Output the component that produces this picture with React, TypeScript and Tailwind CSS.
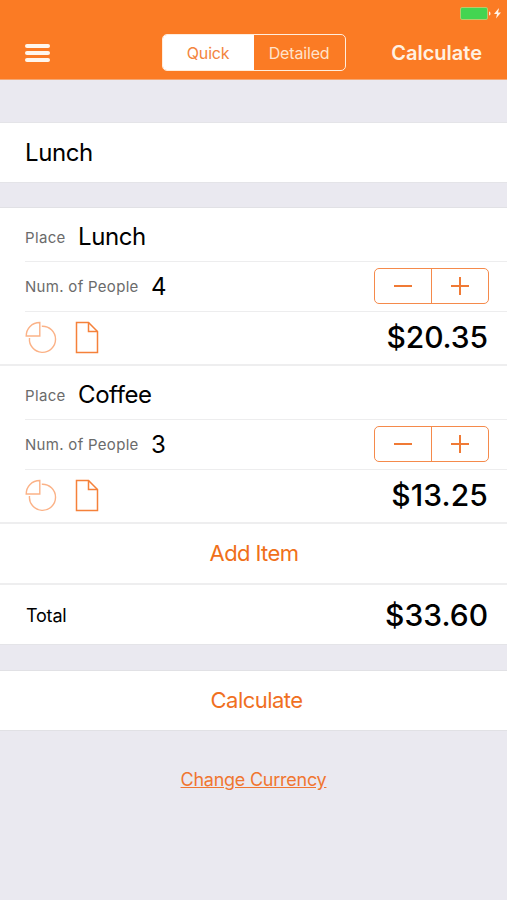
import React from 'react';

const items = [
  { place: 'Lunch', people: 4, amount: '$20.35', amountStyle: 'tracking-[-0.1px]' },
  { place: 'Coffee', people: 3, amount: '$13.25', amountStyle: 'tracking-[0.1px]' },
];

function PieIcon() {
  return (
    <svg width="33" height="33" viewBox="0 0 33 33" fill="none" stroke="#fbb287" strokeWidth="1.4">
      <path d="M14.8 1.5V15H1.2C1.2 7.5 7 1.5 14.8 1.5Z" />
      <path d="M16.8 5.3A13.05 13.05 0 1 1 4.5 17" />
    </svg>
  );
}

function PageIcon() {
  return (
    <svg width="24" height="33" viewBox="0 0 24 33" fill="none" stroke="#f5813a" strokeWidth="1.5">
      <path d="M1.5 1.5H13.5L22.5 10.5V31.5H1.5Z" />
      <path d="M13.5 1.5V10.5H22.5" />
    </svg>
  );
}

function Stepper() {
  return (
    <div className="flex w-[115px] h-[36px] rounded-[5px] border-[1.5px] border-[#f58a4b] text-[#f07a35]">
      <button className="w-[57px] flex items-center justify-center border-r border-[#f58a4b]">
        <svg width="20" height="20" viewBox="0 0 20 20" stroke="currentColor" strokeWidth="2"><path d="M1 10H19" /></svg>
      </button>
      <button className="flex-1 flex items-center justify-center">
        <svg width="20" height="20" viewBox="0 0 20 20" stroke="currentColor" strokeWidth="2"><path d="M1 10H19M10 1V19" /></svg>
      </button>
    </div>
  );
}

function Item({ item }: any) {
  return (
    <div className="bg-white border-b-2 border-[#eeeeef]">
      <div className="ml-[25px] h-[54px] pt-[5px] flex items-center border-b border-[#ededee]">
        <span className="w-[53px] pt-[2px] text-[15px] text-[#6b6b6b] tracking-[0.35px]">Place</span>
        <span className="text-[24px] tracking-[-0.4px]">{item.place}</span>
      </div>
      <div className="ml-[25px] pr-[18px] h-[50px] flex items-center border-b border-[#ededee]">
        <span className="w-[126px] pt-px whitespace-nowrap text-[15px] text-[#6b6b6b] tracking-[0.3px]">Num. of People</span>
        <span className="text-[24px]">{item.people}</span>
        <div className="ml-auto pb-px"><Stepper /></div>
      </div>
      <div className="pl-[25px] pr-[19px] h-[52px] flex items-center">
        <div className="pb-[2px]"><PieIcon /></div>
        <div className="ml-[17px] pb-[2px]"><PageIcon /></div>
        <span className={`ml-auto pb-px text-[30px] font-medium ${item.amountStyle}`}>{item.amount}</span>
      </div>
    </div>
  );
}

export default function App() {
  return (
    <div className="w-full h-[900px] bg-[#eae9f0] text-black font-['Inter',sans-serif]">
      <header className="h-[80px] bg-[#fb7b24] border-b border-[#f3a876] text-white">
        <div className="h-[26px] pt-[7px] pr-[5px] flex justify-end">
          <svg width="42" height="13" viewBox="0 0 42 13">
            <rect x="0.5" y="0.5" width="27" height="12" rx="1.5" fill="#43d551" stroke="#b9c96b" />
            <path d="M29 4.5C31 5 31 8.5 29 8.5Z" fill="#ffe9d8" />
            <path d="M38.5 1.5L34 7H37L36 11.5L41 5.5H38L39 1.5Z" fill="#fff3e8" />
          </svg>
        </div>
        <div className="h-[53px] pl-[25px] pr-[25px] flex items-center justify-between">
          <button className="w-[25px] flex flex-col gap-[3px]">
            <span className="h-[4px] rounded-[2px] bg-[#fff6ec]" />
            <span className="h-[4px] rounded-[2px] bg-[#fff6ec]" />
            <span className="h-[4px] rounded-[2px] bg-[#fff6ec]" />
          </button>
          <div className="ml-[66px] flex w-[184px] h-[37px] rounded-[5px] border-[1.5px] border-[#ffeddd] text-[16px] tracking-[-0.15px] overflow-hidden">
            <button className="w-[91px] bg-white text-[#f3843d]">Quick</button>
            <button className="flex-1 text-[#ffe3cb]">Detailed</button>
          </div>
          <button className="text-[20px] font-semibold text-[#fff1e2]">Calculate</button>
        </div>
      </header>

      <div className="mt-[42px] h-[61px] pl-[25px] flex items-center bg-white border-y border-[#e4e4e8]">
        <span className="text-[24px] tracking-[-0.4px]">Lunch</span>
      </div>

      <div className="mt-[24px] border-t border-[#e1e1e5]">
        {items.map((item) => <Item key={item.place} item={item} />)}
        <button className="w-full h-[61px] pl-px block bg-white border-b-2 border-[#eeeeef] text-[22px] tracking-[-0.6px] text-[#f0701a]">Add Item</button>
        <div className="h-[60px] pl-[26px] pr-[19px] flex items-center justify-between bg-white border-b border-[#e4e4e8]">
          <span className="pt-px text-[18px] tracking-[-0.2px]">Total</span>
          <span className="pt-px text-[30px] font-medium">$33.60</span>
        </div>
      </div>

      <button className="mt-[25px] w-full h-[61px] pl-[6px] block bg-white border-y border-[#e1e1e5] text-[22px] tracking-[-0.55px] text-[#f0701f]">Calculate</button>
      <div className="mt-[35px] text-center">
        <a className="text-[18px] tracking-[-0.25px] text-[#f07630] underline">Change Currency</a>
      </div>
    </div>
  );
}
